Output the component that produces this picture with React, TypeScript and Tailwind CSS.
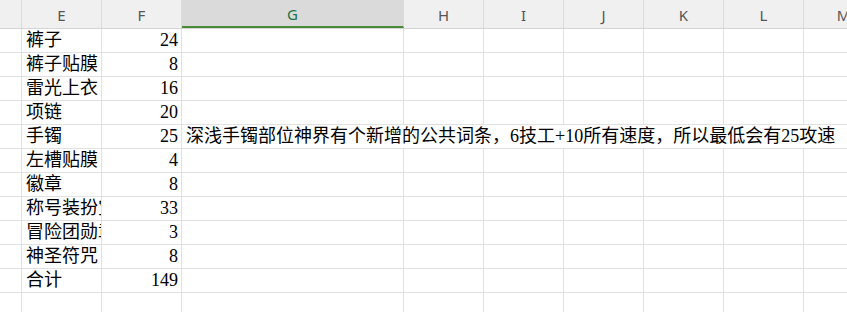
const cols = [
  { key: "D", label: "", w: "w-[22px]" },
  { key: "E", label: "E", w: "w-[80px]" },
  { key: "F", label: "F", w: "w-[80px]" },
  { key: "G", label: "G", w: "w-[222px]" },
  { key: "H", label: "H", w: "w-[80px]" },
  { key: "I", label: "I", w: "w-[80px]" },
  { key: "J", label: "J", w: "w-[80px]" },
  { key: "K", label: "K", w: "w-[80px]" },
  { key: "L", label: "L", w: "w-[80px]" },
  { key: "M", label: "M", w: "w-[80px]" },
];

const rows: { name: string; value: string; note?: string }[] = [
  { name: "裤子", value: "24" },
  { name: "裤子贴膜", value: "8" },
  { name: "雷光上衣", value: "16" },
  { name: "项链", value: "20" },
  {
    name: "手镯",
    value: "25",
    note: "深浅手镯部位神界有个新增的公共词条，6技工+10所有速度，所以最低会有25攻速",
  },
  { name: "左槽贴膜", value: "4" },
  { name: "徽章", value: "8" },
  { name: "称号装扮宝珠", value: "33" },
  { name: "冒险团勋章", value: "3" },
  { name: "神圣符咒", value: "8" },
  { name: "合计", value: "149" },
  { name: "", value: "" },
];

const cellFont = "font-['Liberation_Serif','Noto_Sans_CJK_SC',serif] text-[18px] text-black";

export default function App() {
  return (
    <div className="h-[312px] w-[847px] overflow-hidden bg-white">
      <div className="flex h-[29px] w-max border-b border-[#d4d4d4] bg-[#f0f0f0]">
        {cols.map((c) =>
          c.key === "G" ? (
            <div
              key={c.key}
              className={`${c.w} flex shrink-0 items-center justify-center border-r border-[#d8d8d8] border-b-2 border-b-[#4a8b3a] bg-[#dadada] pt-[2px] font-['Noto_Sans',sans-serif] text-[15px] text-[#217346]`}
            >
              {c.label}
            </div>
          ) : (
            <div
              key={c.key}
              className={`${c.w} flex shrink-0 items-center justify-center border-r border-[#dcdcdc] pt-[2px] font-['Noto_Sans',sans-serif] text-[15px] text-[#555]`}
            >
              {c.label}
            </div>
          )
        )}
      </div>

      {rows.map((r, i) => (
        <div key={i} className={`flex h-[24px] w-max ${cellFont}`}>
          <div className="w-[22px] shrink-0 border-r border-b border-[#e1e1e1]" />
          <div className="flex w-[80px] shrink-0 items-center overflow-hidden whitespace-nowrap border-r border-b border-[#e1e1e1] pl-[4px]">
            {r.name}
          </div>
          <div className="flex w-[80px] shrink-0 items-center justify-end border-r border-b border-[#e1e1e1] pr-[3px]">
            {r.value}
          </div>
          {r.note ? (
            <div className="flex w-[702px] shrink-0 items-center whitespace-nowrap border-b border-[#e1e1e1] pl-[4px]">
              {r.note}
            </div>
          ) : (
            cols.slice(3).map((c) => (
              <div key={c.key} className={`${c.w} shrink-0 border-r border-b border-[#e1e1e1]`} />
            ))
          )}
        </div>
      ))}
    </div>
  );
}
